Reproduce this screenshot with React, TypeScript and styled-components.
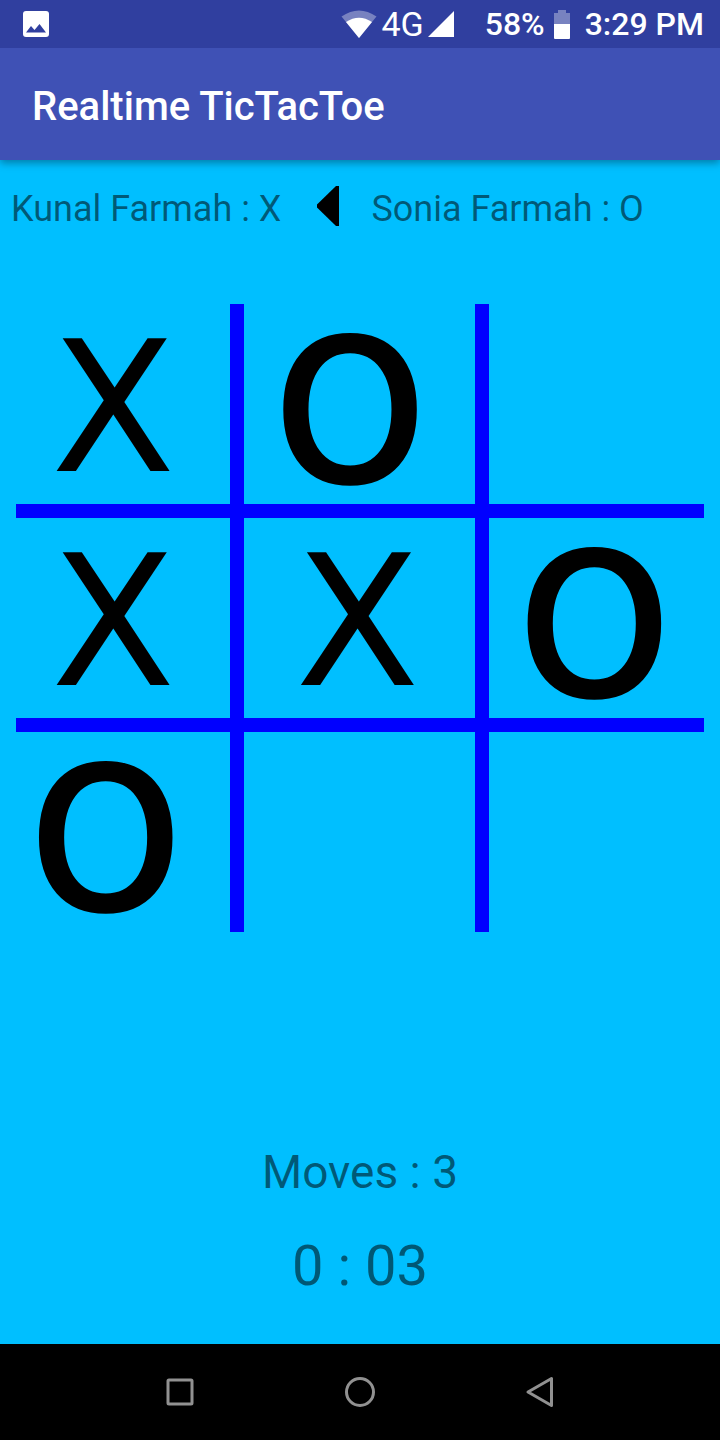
import React from "react";
import styled, { createGlobalStyle } from "styled-components";

const GlobalStyle = createGlobalStyle`
  * { box-sizing: border-box; }
  body {
    margin: 0;
    background: #00bfff;
    font-family: Roboto, "Liberation Sans", sans-serif;
  }
`;

const Screen = styled.div`
  min-height: 100vh;
  display: flex;
  flex-direction: column;
`;

const StatusBar = styled.div`
  position: relative;
  z-index: 1;
  height: 48px;
  padding: 0 16px 0 23px;
  display: flex;
  align-items: center;
  justify-content: space-between;
  background: #303f9f;
  color: #fff;
  font-size: 32px;
  font-weight: 500;
  line-height: 48px;

  svg { display: block; }
`;

const StatusGroup = styled.div`
  display: flex;
  align-items: center;
`;

const NetworkType = styled.span`
  margin: 0 4px;
  font-size: 34px;
  font-weight: 400;
`;

const BatteryLevel = styled.span`
  margin: 0 9px 0 31px;
`;

const Clock = styled.time`
  margin-left: 15px;
`;

const AppBar = styled.header`
  height: 112px;
  padding: 0 32px;
  display: flex;
  align-items: center;
  background: #3f51b5;
  box-shadow: 0 3px 8px rgba(0, 0, 0, 0.35);
`;

const Title = styled.h1`
  margin: 0;
  padding-top: 6px;
  color: #fff;
  font-size: 40px;
  font-weight: 500;
  line-height: 48px;
`;

const Game = styled.main`
  flex: 1;
  display: flex;
  flex-direction: column;
  color: rgba(0, 0, 0, 0.54);
`;

const Players = styled.div`
  height: 144px;
  padding: 25px 11px 0;
  display: flex;
  align-items: flex-start;
  gap: 32px;
  font-size: 36px;
  line-height: 48px;
  white-space: nowrap;
`;

const TurnArrow = styled.svg`
  margin: 1px 0 0 4px;
  flex: none;
`;

const Board = styled.div`
  padding-right: 1px;
  display: grid;
  grid-template-columns: 1fr 14px 1fr 14px 1fr;
  grid-template-rows: 200px 14px 200px 14px 200px;
`;

const VerticalLine = styled.div<{ $track: number }>`
  grid-column: ${(p) => p.$track};
  grid-row: 1 / -1;
  background: #00f;
`;

const HorizontalLine = styled.div<{ $track: number }>`
  grid-column: 1 / -1;
  grid-row: ${(p) => p.$track};
  margin: 0 15px 0 16px;
  background: #00f;
`;

type Mark = "X" | "o" | "";

const Cell = styled.button<{ $mark: Mark; $row: number; $column: number }>`
  grid-row: ${(p) => p.$row * 2 + 1};
  grid-column: ${(p) => p.$column * 2 + 1};
  display: flex;
  align-items: flex-start;
  justify-content: center;
  min-width: 0;
  border: 0;
  padding: 0 ${(p) => (p.$mark === "o" ? 19 : 4)}px 0 0;
  background: transparent;
  color: #000;
  font-family: "DejaVu Sans", sans-serif;
  font-size: ${(p) => (p.$mark === "o" ? 266 : 181)}px;
  line-height: ${(p) => (p.$mark === "o" ? 172 : 210)}px;
`;

const Score = styled.div`
  margin-top: auto;
  padding-bottom: 40px;
  display: flex;
  flex-direction: column;
  align-items: center;
  gap: 24px;
`;

const Moves = styled.div`
  font-size: 46px;
  line-height: 64px;
`;

const Timer = styled.div`
  font-size: 56px;
  line-height: 76px;
`;

const NavBar = styled.nav`
  height: 96px;
  padding: 0 90px;
  display: grid;
  grid-template-columns: repeat(3, 1fr);
  background: #000;
`;

const NavButton = styled.button`
  display: flex;
  align-items: center;
  justify-content: center;
  border: 0;
  padding: 0;
  background: transparent;
  color: #919191;

  svg {
    fill: none;
    stroke: currentColor;
    stroke-width: 3;
    stroke-linejoin: round;
  }
`;

const marks: Mark[][] = [
  ["X", "o", ""],
  ["X", "X", "o"],
  ["o", "", ""],
];

export default function App() {
  return (
    <Screen>
      <GlobalStyle />
      <StatusBar>
        <svg width="26" height="26" viewBox="0 0 26 26" aria-hidden="true">
          <rect width="26" height="26" rx="3" fill="#fff" />
          <path d="M3 21.500 L8 15 L11.500 19 L16.500 13 L23 21.500Z" fill="#303f9f" />
        </svg>
        <StatusGroup>
          <svg width="36" height="28" viewBox="0 0 36 28" aria-hidden="true">
            <path d="M0.500 6.500 Q18 -5.500 35.500 6.500 L18 28Z" fill="#fff" opacity=".35" />
            <path d="M5 12 Q18 3.500 31 12 L18 28Z" fill="#fff" />
          </svg>
          <NetworkType>4G</NetworkType>
          <svg width="26" height="26" viewBox="0 0 26 26" aria-hidden="true">
            <path d="M26 0V26H0Z" fill="#fff" />
          </svg>
          <BatteryLevel>58%</BatteryLevel>
          <svg width="16" height="29" viewBox="0 0 16 29" aria-hidden="true">
            <path d="M4 0H12V3H16V14H0V3H4Z" fill="#fff" opacity=".35" />
            <path d="M0 14H16V28Q16 29 15 29H1Q0 29 0 28Z" fill="#fff" />
          </svg>
          <Clock>3:29 PM</Clock>
        </StatusGroup>
      </StatusBar>
      <AppBar>
        <Title>Realtime TicTacToe</Title>
      </AppBar>
      <Game>
        <Players>
          <span>Kunal Farmah : X</span>
          <TurnArrow width="22" height="40" viewBox="0 0 22 40" aria-hidden="true">
            <path d="M19 0H22V40H19L0 21.500V18.500Z" fill="#000" />
          </TurnArrow>
          <span>Sonia Farmah : O</span>
        </Players>
        <Board>
          {marks.map((row, r) =>
            row.map((mark, c) => (
              <Cell
                key={`${r}-${c}`}
                type="button"
                $mark={mark}
                $row={r}
                $column={c}
                aria-label={`Row ${r + 1}, column ${c + 1}: ${mark || "empty"}`}
              >
                {mark}
              </Cell>
            ))
          )}
          <VerticalLine $track={2} />
          <VerticalLine $track={4} />
          <HorizontalLine $track={2} />
          <HorizontalLine $track={4} />
        </Board>
        <Score>
          <Moves>Moves : 3</Moves>
          <Timer>0 : 03</Timer>
        </Score>
      </Game>
      <NavBar aria-label="System">
        <NavButton type="button" aria-label="Recent apps">
          <svg width="30" height="30" viewBox="0 0 30 30">
            <rect x="3" y="3" width="24" height="24" rx="1" />
          </svg>
        </NavButton>
        <NavButton type="button" aria-label="Home">
          <svg width="32" height="32" viewBox="0 0 32 32">
            <circle cx="16" cy="16" r="13.500" />
          </svg>
        </NavButton>
        <NavButton type="button" aria-label="Back">
          <svg width="32" height="32" viewBox="0 0 32 32">
            <path d="M27.500 2.500V29.500L4 16Z" />
          </svg>
        </NavButton>
      </NavBar>
    </Screen>
  );
}
